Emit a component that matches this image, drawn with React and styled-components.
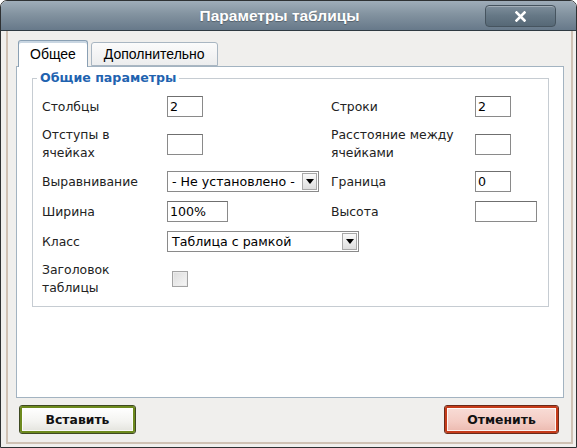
import React from "react";
import styled, { createGlobalStyle } from "styled-components";

const Global = createGlobalStyle`
  html, body { margin: 0; padding: 0; background: #ffffff; }
  * { box-sizing: border-box; }
`;

const Window = styled.div`
  width: 577px;
  height: 448px;
  border: 1px solid #2e3133;
  border-radius: 7px 7px 0 0;
  overflow: hidden;
  display: flex;
  flex-direction: column;
  background: #f0efed;
`;

const TitleBar = styled.div`
  height: 30px;
  flex: none;
  position: relative;
  display: flex;
  align-items: center;
  justify-content: center;
  padding-right: 18px;
  background: linear-gradient(#9fadb9, #8393a0 45%, #67798a);
  border-bottom: 1px solid #2f3a42;
  font-family: "Liberation Sans", Arial, sans-serif;
  font-weight: bold;
  font-size: 15.5px;
  color: #ffffff;
  text-shadow: 0 1px 1px rgba(0, 0, 0, 0.3);
`;

const CloseButton = styled.div`
  position: absolute;
  right: 20px;
  top: 4px;
  width: 71px;
  height: 22px;
  border-radius: 4px;
  border: 1px solid #46545f;
  background: linear-gradient(#7e8e9b, #657785 50%, #566876);
  box-shadow: inset 0 1px 0 rgba(255, 255, 255, 0.3);
  display: flex;
  align-items: center;
  justify-content: center;
`;

const Body = styled.div`
  flex: 1;
  display: flex;
  padding: 0 3px 3px 5px;
  background: #f0efed;
`;

const Frame = styled.div`
  flex: 1;
  display: flex;
  flex-direction: column;
  border: 2px solid #cfc1b4;
  border-top: none;
  padding: 9px 7px 9px 8px;
  background: #f0efed;
`;

const TabRow = styled.div`
  display: flex;
  align-items: flex-end;
  gap: 3px;
  padding-left: 2px;
  height: 26px;
  position: relative;
  z-index: 1;
`;

const Tab = styled.div`
  font-family: "Liberation Sans", Arial, sans-serif;
  font-size: 14px;
  color: #000;
  border: 1px solid ${(p) => (p.$active ? "#8aa0b4" : "#a9b6c2")};
  border-bottom: ${(p) => (p.$active ? "none" : "1px solid #a9b6c2")};
  border-radius: 3px 3px 0 0;
  background: ${(p) =>
    p.$active ? "#ffffff" : "linear-gradient(#fbfbfb, #ecedee)"};
  height: ${(p) => (p.$active ? "27px" : "24px")};
  margin-bottom: ${(p) => (p.$active ? "-1px" : "0")};
  padding: 0 ${(p) => (p.$active ? "11px" : "12px")};
  display: flex;
  align-items: center;
  box-shadow: ${(p) => (p.$active ? "inset 0 2px 0 #c9d6e2" : "none")};
`;

const Panel = styled.div`
  flex: 1;
  background: #ffffff;
  border: 1px solid #a3b3c1;
  padding: 3px 14px 0 15px;
`;

const Fieldset = styled.fieldset`
  margin: 0;
  border: 1px solid #c6ccd2;
  padding: 10px 9px 9px 9px;
`;

const Legend = styled.legend`
  font-family: "DejaVu Sans", Verdana, sans-serif;
  font-weight: bold;
  font-size: 12.6px;
  line-height: 16px;
  color: #1f63b0;
  padding: 0 3px;
  margin-left: -5px;
`;

const FormGrid = styled.div`
  display: grid;
  grid-template-columns: 125px 164px 144px 1fr;
  row-gap: 9px;
  align-items: center;
`;

const Label = styled.div`
  font-family: "DejaVu Sans", Verdana, sans-serif;
  font-size: 12.4px;
  line-height: 18px;
  color: #222;
`;

const Input = styled.div`
  width: ${(p) => p.$w || 36}px;
  height: 21px;
  border: 1px solid #8a8a8a;
  border-top-color: #6f6f6f;
  background: #fff;
  font-family: "DejaVu Sans", Verdana, sans-serif;
  font-size: 12.6px;
  line-height: 19px;
  padding: 0 2px;
  color: #000;
`;

const Select = styled.div`
  width: ${(p) => p.$w}px;
  height: 21px;
  border: 1px solid #8a8a8a;
  background: #fff;
  display: flex;
  align-items: stretch;
  font-family: "DejaVu Sans", Verdana, sans-serif;
  font-size: 12.6px;
  color: #000;
`;

const SelectText = styled.div`
  flex: 1;
  line-height: 19px;
  padding-left: 4px;
  white-space: nowrap;
  overflow: hidden;
`;

const SelectArrow = styled.div`
  width: 15px;
  margin: 1px;
  border: 1px solid #a8a8a8;
  background: linear-gradient(#fafafa, #dedede);
  display: flex;
  align-items: center;
  justify-content: center;
`;

const Checkbox = styled.div`
  width: 16px;
  height: 16px;
  margin-left: 5px;
  border: 1px solid #a3a3a3;
  background: linear-gradient(135deg, #dcdcdc, #f7f7f7);
  box-shadow: inset 0 0 0 1px #ececec;
`;

const ButtonRow = styled.div`
  display: flex;
  justify-content: space-between;
  padding: 8px 6px 0 4px;
`;

const Button = styled.div`
  width: ${(p) => p.$w}px;
  height: 27px;
  border: 2px solid ${(p) => (p.$tone === "ok" ? "#6d8a1e" : "#c53b1a")};
  outline: 1px solid ${(p) => (p.$tone === "ok" ? "#3f4a22" : "#6a2a1a")};
  border-radius: 2px;
  background: ${(p) =>
    p.$tone === "ok"
      ? "linear-gradient(#ffffff, #f3f3f0 60%, #e4e4de)"
      : "linear-gradient(#f8dcd6, #f4ccc4 60%, #ecbab0)"};
  box-shadow: inset 0 0 0 1px rgba(255, 255, 255, 0.8);
  display: flex;
  align-items: center;
  justify-content: center;
  font-family: "DejaVu Sans", Verdana, sans-serif;
  font-weight: bold;
  font-size: 12.4px;
  color: #111;
`;

const Arrow = () => (
  <svg width="8" height="5" viewBox="0 0 8 5">
    <polygon points="0,0 8,0 4,5" fill="#000" />
  </svg>
);

export default function App() {
  return (
    <>
      <Global />
      <Window>
        <TitleBar>
          Параметры таблицы
          <CloseButton>
            <svg width="11" height="11" viewBox="0 0 11 11">
              <path
                d="M1.5 1.5 L9.5 9.5 M9.5 1.5 L1.5 9.5"
                stroke="#fff"
                strokeWidth="2.6"
                strokeLinecap="square"
              />
            </svg>
          </CloseButton>
        </TitleBar>
        <Body>
          <Frame>
            <TabRow>
              <Tab $active>Общее</Tab>
              <Tab>Дополнительно</Tab>
            </TabRow>
            <Panel>
              <Fieldset>
                <Legend>Общие параметры</Legend>
                <FormGrid>
                  <Label>Столбцы</Label>
                  <Input>2</Input>
                  <Label>Строки</Label>
                  <Input>2</Input>

                  <Label>
                    Отступы в<br />ячейках
                  </Label>
                  <Input />
                  <Label>
                    Расстояние между
                    <br />
                    ячейками
                  </Label>
                  <Input />

                  <Label>Выравнивание</Label>
                  <Select $w={152}>
                    <SelectText>- Не установлено -</SelectText>
                    <SelectArrow>
                      <Arrow />
                    </SelectArrow>
                  </Select>
                  <Label>Граница</Label>
                  <Input>0</Input>

                  <Label>Ширина</Label>
                  <Input $w={61}>100%</Input>
                  <Label>Высота</Label>
                  <Input $w={62} />

                  <Label>Класс</Label>
                  <Select $w={192}>
                    <SelectText>Таблица с рамкой</SelectText>
                    <SelectArrow>
                      <Arrow />
                    </SelectArrow>
                  </Select>
                  <div />
                  <div />

                  <Label>
                    Заголовок
                    <br />
                    таблицы
                  </Label>
                  <Checkbox />
                  <div />
                  <div />
                </FormGrid>
              </Fieldset>
            </Panel>
            <ButtonRow>
              <Button $tone="ok" $w={115}>
                Вставить
              </Button>
              <Button $tone="cancel" $w={113}>
                Отменить
              </Button>
            </ButtonRow>
          </Frame>
        </Body>
      </Window>
    </>
  );
}
